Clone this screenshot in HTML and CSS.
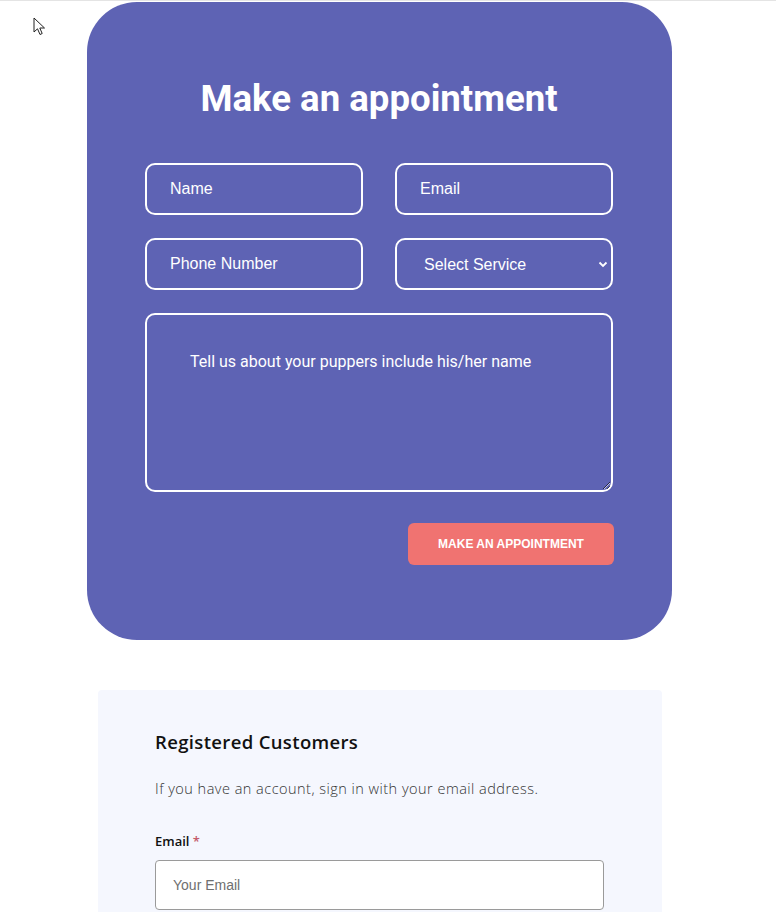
FILE: index.html
```html
<!DOCTYPE html>
<html>
<head>
<meta charset="utf-8">
<link rel="stylesheet" href="styles.css">
</head>
<body>
<div class="topline"></div>
<svg class="cursor" width="14" height="20" viewBox="0 0 14 20"><path d="M1 1 L1 15 L4.5 11.8 L7 17.5 L9.2 16.5 L6.8 11 L11.5 11 Z" fill="#fff" stroke="#222" stroke-width="1"/></svg>
<main class="page">
  <section class="card">
    <h1 class="title">Make an appointment</h1>
    <form class="form">
      <div class="grid">
        <input class="field" type="text" placeholder="Name">
        <input class="field" type="text" placeholder="Email">
        <input class="field" type="text" placeholder="Phone Number">
        <div class="field select">
          <span>Select Service</span>
          <svg width="10" height="7" viewBox="0 0 10 7"><path d="M1.5 1.5 L5 5 L8.5 1.5" fill="none" stroke="#fff" stroke-width="1.8"/></svg>
        </div>
      </div>
      <textarea class="message" placeholder="Tell us about your puppers include his/her name"></textarea>
      <div class="actions">
        <button type="button" class="btn">MAKE AN APPOINTMENT</button>
      </div>
    </form>
  </section>
  <section class="login">
    <h2 class="login-title">Registered Customers</h2>
    <p class="login-text">If you have an account, sign in with your email address.</p>
    <label class="label">Email <span class="req">*</span></label>
    <input class="email" type="text" placeholder="Your Email">
  </section>
</main>
</body>
</html>
```
FILE: styles.css
```css
* { box-sizing: border-box; }
html, body { margin: 0; padding: 0; background: #fff; }
body { font-family: "Liberation Sans", Arial, sans-serif; position: relative; overflow: hidden; height: 912px; }
.topline { height: 2px; border-top: 1px solid #e4e4e4; }
.cursor { position: absolute; left: 33px; top: 17px; }
.page { padding-left: 87px; }
.card {
  width: 585px;
  height: 638px;
  background: #5e63b4;
  border-radius: 50px;
  padding: 74px 59px 0 58px;
}
.title {
  margin: 0 0 41px;
  text-align: center;
  font-family: Roboto, sans-serif;
  font-weight: 700;
  font-size: 36.6px;
  line-height: 46px;
  color: #fff;
}
.grid {
  display: grid;
  grid-template-columns: 218px 218px;
  column-gap: 32px;
  row-gap: 23px;
}
.field {
  height: 52px;
  border: 2px solid #fff;
  border-radius: 10px;
  background: transparent;
  color: #fff;
  font-family: "Liberation Sans", Arial, sans-serif;
  font-size: 16px;
  padding: 0 0 0 23px;
  outline: none;
}
.field::placeholder { color: #fff; opacity: 1; }
.select {
  display: flex;
  align-items: center;
  justify-content: space-between;
  padding: 2px 3px 0 27px;
}
.select svg { margin-top: -2px; }
.message {
  display: block;
  width: 468px;
  height: 179px;
  margin-top: 23px;
  border: 2px solid #fff;
  border-radius: 10px;
  background: transparent;
  color: #fff;
  font-family: Roboto, sans-serif;
  font-size: 16px;
  padding: 37px 43px;
  resize: vertical;
  outline: none;
}
.message::placeholder { color: #fff; opacity: 1; }
.actions { display: flex; justify-content: flex-end; margin: 31px -1px 0 0; }
.btn {
  width: 206px;
  height: 42px;
  border: 0;
  border-radius: 6px;
  background: #f07371;
  color: #fff;
  font-family: "Liberation Sans", Arial, sans-serif;
  font-weight: 700;
  font-size: 12px;
  padding: 0;
}
.login {
  width: 564px;
  margin: 50px 0 0 11px;
  background: #f5f7fe;
  border-radius: 4px;
  padding: 40px 58px 0 57px;
  height: 240px;
}
.login-title {
  margin: 0;
  font-family: "Open Sans", sans-serif;
  font-weight: 600;
  font-size: 18.5px;
  letter-spacing: 0.35px;
  line-height: 24px;
  color: #111;
}
.login-text {
  margin: 25px 0 0;
  font-family: "Open Sans", sans-serif;
  font-weight: 300;
  font-size: 14.5px;
  letter-spacing: 0.48px;
  line-height: 20px;
  color: #333;
}
.label {
  display: block;
  margin-top: 33px;
  font-family: "Open Sans", sans-serif;
  font-weight: 600;
  font-size: 13px;
  line-height: 18px;
  color: #111;
}
.req { color: #c45b6b; }
.email {
  display: block;
  margin-top: 10px;
  width: 449px;
  height: 50px;
  border: 1px solid #9a9a9a;
  border-radius: 4px;
  background: #fff;
  font-family: "Liberation Sans", Arial, sans-serif;
  font-size: 14px;
  padding: 0 0 0 17px;
  outline: none;
}
.email::placeholder { color: #6f6f6f; }
```
